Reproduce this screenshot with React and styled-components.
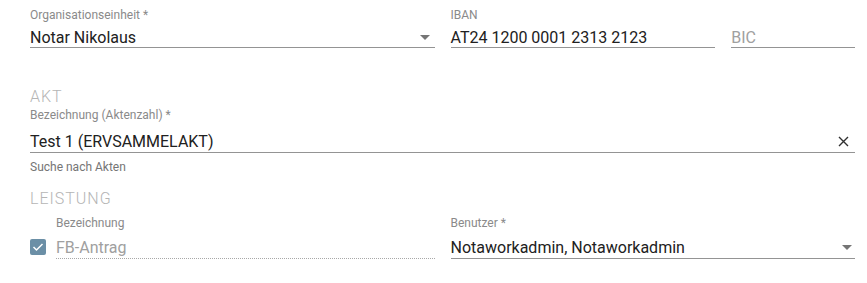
import React from "react";
import styled, { createGlobalStyle } from "styled-components";

const GlobalStyle = createGlobalStyle`
  body {
    margin: 0;
    background: #fff;
    font-family: Roboto, "Noto Sans", Arial, sans-serif;
  }
`;

const Form = styled.div`
  width: 825px;
  padding: 8px 0 0 30px;
  display: flex;
  flex-direction: column;
`;

const Row = styled.div`
  display: flex;
  gap: 16px;
  align-items: flex-end;
`;

const Column = styled.div`
  flex: ${(p) => p.flex || 1};
  display: flex;
  gap: ${(p) => p.gap ?? 16}px;
  align-items: flex-end;
  min-width: 0;
`;

const Field = styled.div`
  flex: ${(p) => p.flex || 1};
  display: flex;
  flex-direction: column;
  min-width: 0;
`;

const Label = styled.label`
  font-size: 12px;
  line-height: 14px;
  color: #8a8a8a;
  height: 14px;
`;

const InputRow = styled.div`
  display: flex;
  align-items: center;
  height: ${(p) => p.h || 26}px;
  padding-top: ${(p) => p.pt || 6}px;
  box-sizing: border-box;
  border-bottom: 1px ${(p) => (p.disabled ? "dotted" : "solid")}
    ${(p) => (p.disabled ? "#a8a8a8" : "#949494")};
`;

const Value = styled.span`
  flex: 1;
  font-size: 16px;
  line-height: 19px;
  color: ${(p) => (p.muted ? "#a0a0a0" : "#212121")};
  white-space: nowrap;
`;

const Section = styled.div`
  font-size: 16px;
  font-weight: 300;
  line-height: 19px;
  letter-spacing: 1px;
  color: #b5b5b5;
  margin-top: ${(p) => p.mt}px;
`;

const Helper = styled.div`
  font-size: 12px;
  line-height: 14px;
  color: #757575;
  margin-top: 7px;
`;

const IconSlot = styled.span`
  display: flex;
  align-items: center;
  justify-content: center;
  width: 24px;
  height: 19px;
  margin-right: ${(p) => p.mr || 0}px;
  color: ${(p) => p.color || "rgba(0,0,0,0.54)"};
`;

const CheckBox = styled.span`
  width: 16px;
  height: 16px;
  border-radius: 2px;
  background: #6b8fa6;
  display: flex;
  align-items: center;
  justify-content: center;
  margin-bottom: 4px;
  flex: none;
`;

const LeistungRow = styled(Row)`
  margin-top: 8px;
`;

const ArrowDown = ({ mr }) => (
  <IconSlot mr={mr}>
    <svg width="10" height="5" viewBox="0 0 10 5">
      <path d="M0 0 L5 5 L10 0 Z" fill="currentColor" />
    </svg>
  </IconSlot>
);

const Clear = () => (
  <IconSlot mr={0} color="#303030">
    <svg width="11" height="11" viewBox="0 0 11 11">
      <path d="M1 1 L10 10 M10 1 L1 10" stroke="currentColor" strokeWidth="1.4" />
    </svg>
  </IconSlot>
);

const Check = () => (
  <svg width="12" height="10" viewBox="0 0 12 10">
    <path d="M1.5 5 L4.5 8 L10.5 2" stroke="#fff" strokeWidth="1.5" fill="none" />
  </svg>
);

export default function App() {
  return (
    <>
      <GlobalStyle />
      <Form>
        <Row>
          <Field>
            <Label>Organisationseinheit *</Label>
            <InputRow>
              <Value>Notar Nikolaus</Value>
              <ArrowDown mr={-2} />
            </InputRow>
          </Field>
          <Column>
            <Field flex={265}>
              <Label>IBAN</Label>
              <InputRow>
                <Value>AT24 1200 0001 2313 2123</Value>
              </InputRow>
            </Field>
            <Field flex={124}>
              <InputRow>
                <Value muted>BIC</Value>
              </InputRow>
            </Field>
          </Column>
        </Row>

        <Section mt={39}>AKT</Section>
        <Field>
          <Label style={{ marginTop: 2 }}>Bezeichnung (Aktenzahl) *</Label>
          <InputRow h={31} pt={8}>
            <Value>Test 1 (ERVSAMMELAKT)</Value>
            <Clear />
          </InputRow>
          <Helper>Suche nach Akten</Helper>
        </Field>

        <Section mt={15}>LEISTUNG</Section>
        <LeistungRow>
          <Column gap={10}>
            <CheckBox>
              <Check />
            </CheckBox>
            <Field>
              <Label>Bezeichnung</Label>
              <InputRow h={29} pt={7} disabled>
                <Value muted>FB-Antrag</Value>
              </InputRow>
            </Field>
          </Column>
          <Field>
            <Label>Benutzer *</Label>
            <InputRow h={29} pt={7}>
              <Value>Notaworkadmin, Notaworkadmin</Value>
              <ArrowDown mr={-4} />
            </InputRow>
          </Field>
        </LeistungRow>
      </Form>
    </>
  );
}
